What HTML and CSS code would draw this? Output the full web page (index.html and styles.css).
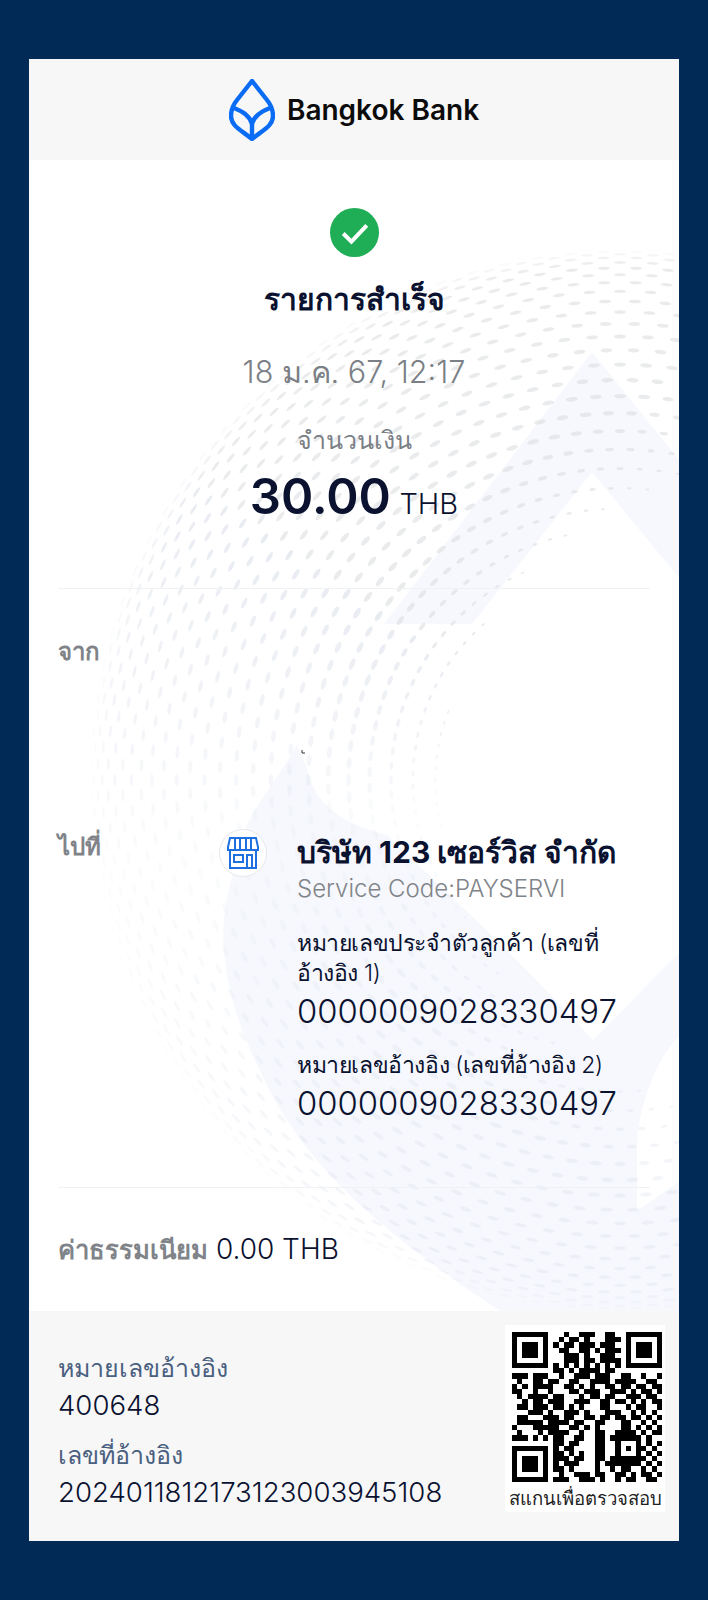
FILE: index.html
```html
<!DOCTYPE html>
<html lang="th">
<head>
    <meta charset="UTF-8">
    <meta name="viewport" content="width=device-width, initial-scale=1.0">
    <title>รายการสำเร็จ</title>
    <link rel="stylesheet" href="styles.css">
</head>
<body>
    <div id="slip">
        <div class="slip-header">
            <svg class="logo-mark" viewBox="0 0 46 62" aria-hidden="true">
                <path d="M23 2 L8 21 C4 26 2 31 2 37 C2 47 12 51 23 60 C34 51 44 47 44 37 C44 31 42 26 38 21Z"/>
                <path d="M5 29 C13 32 21 37 23 45 C25 37 33 32 41 29"/>
                <path d="M23 45 V60"/>
            </svg>
            <span class="logo-text">Bangkok Bank</span>
        </div>

        <div class="slip-body">
            <svg id="watermark" viewBox="29 160 650 1151" aria-hidden="true">
                <path class="wm" d="M592 352 L384 624 H472 L592 472 L680 579 V461Z"/>
                <path class="wm" d="M297 745 C275 785 243 815 236 860 C226 900 220 925 225 960 C230 1000 240 1030 262 1075 C300 1158 370 1225 500 1311 H680 V1181 L637 1211 V1150 C637 1110 655 1060 680 1035 V952 L593 1040 C520 960 450 895 387 835 C350 825 315 810 307 768Z"/>
                <g id="dots"></g>
                <path class="speck" d="M302 750 V753 H305"/>
            </svg>

            <div class="summary">
                <div class="check-badge">
                    <svg viewBox="0 0 24 24" aria-hidden="true"><path d="M6.5 12.5 L10.5 16.5 L18 8.5"/></svg>
                </div>
                <h1>รายการสำเร็จ</h1>
                <div class="date">18 ม.ค. 67, 12:17</div>
                <div class="amount-label">จำนวนเงิน</div>
                <div class="amount"><strong>30.00</strong> <span>THB</span></div>
            </div>

            <div class="row row-from">
                <div class="row-label">จาก</div>
            </div>

            <div class="row row-to">
                <div class="row-label">ไปที่</div>
                <div class="store-icon">
                    <svg viewBox="0 0 34 34" aria-hidden="true">
                        <path d="M4 2 H30 L32 11 V14 H2 V11Z"/>
                        <path d="M9 2 V14 M14 2 V14 M20 2 V14 M25 2 V14"/>
                        <path d="M4 14 V32 H30 V14"/>
                        <path d="M8 19 H17 V26 H8Z M21 32 V19 H26 V32"/>
                    </svg>
                </div>
                <div class="payee">
                    <div class="payee-name">บริษัท 123 เซอร์วิส จำกัด</div>
                    <div class="payee-code">Service Code:PAYSERVI</div>
                    <div class="ref-label">หมายเลขประจำตัวลูกค้า (เลขที่<br>อ้างอิง 1)</div>
                    <div class="ref-value">0000009028330497</div>
                    <div class="ref-label">หมายเลขอ้างอิง (เลขที่อ้างอิง 2)</div>
                    <div class="ref-value">0000009028330497</div>
                </div>
            </div>

            <div class="fee">
                <span class="row-label">ค่าธรรมเนียม</span> 0.00 THB
            </div>
        </div>

        <div class="slip-footer">
            <div class="refs">
                <div class="foot-label">หมายเลขอ้างอิง</div>
                <div class="foot-value">400648</div>
                <div class="foot-label">เลขที่อ้างอิง</div>
                <div class="foot-value">2024011812173123003945108</div>
            </div>
            <div class="qr-box">
                <svg id="qr" viewBox="0 0 29 29" shape-rendering="crispEdges" aria-hidden="true"></svg>
                <div class="qr-caption">สแกนเพื่อตรวจสอบ</div>
            </div>
        </div>
    </div>
    <script src="app.js"></script>
</body>
</html>
```

FILE: styles.css
```css
* {
    box-sizing: border-box;
}
body {
    margin: 0;
    height: 1600px;
    padding-top: 59px;
    background-color: #012a56;
    font-family: Inter, "Noto Sans", "Liberation Sans", sans-serif;
    color: #0a1230;
}
#slip {
    width: 650px;
    margin: 0 auto;
    background: white;
}
.slip-header {
    height: 101px;
    background: #f7f7f8;
    display: flex;
    align-items: center;
    justify-content: center;
    gap: 12px;
}
.logo-mark {
    width: 46px;
    height: 62px;
    fill: none;
    stroke: #0a6cf5;
    stroke-width: 4.4;
    stroke-linejoin: miter;
}
.logo-text {
    font-size: 28px;
    font-weight: 600;
    color: #0b0b0b;
}
.slip-body {
    position: relative;
    height: 1151px;
    overflow: hidden;
}
#watermark {
    position: absolute;
    left: 0;
    top: 0;
    width: 650px;
    height: 1151px;
}
.wm {
    fill: #f6f8fd;
}
.speck {
    fill: none;
    stroke: #333;
    stroke-width: 1;
}
.summary, .row, .fee {
    position: relative;
}
.summary {
    height: 429px;
    margin: 0 29px;
    padding-top: 48px;
    border-bottom: 1px solid #f0f1f3;
    text-align: center;
}
.check-badge {
    width: 49px;
    height: 49px;
    margin: 0 auto;
    border-radius: 50%;
    background: #1fae56;
}
.check-badge svg {
    width: 49px;
    height: 49px;
    fill: none;
    stroke: white;
    stroke-width: 2;
}
h1 {
    margin: 22px 0 0;
    font-size: 30px;
    line-height: 40px;
    font-weight: 700;
}
.date {
    margin-top: 31px;
    font-size: 30.6px;
    line-height: 44px;
    font-weight: 300;
    color: #7b7f86;
}
.amount-label {
    margin-top: 29px;
    font-size: 25px;
    line-height: 34px;
    font-weight: 300;
    color: #7b7f86;
}
.amount {
    margin-top: 10px;
    line-height: 60px;
}
.amount strong {
    font-size: 49px;
    font-weight: 600;
}
.amount span {
    margin-left: 4px;
    font-size: 29px;
    font-weight: 300;
}
.row {
    display: flex;
    padding: 0 29px;
}
.row-label {
    font-size: 24px;
    font-weight: 700;
    color: #808489;
}
.row-from {
    height: 238px;
    padding-top: 43px;
}
.row-to {
    height: 360px;
}
.row-to .row-label {
    width: 161px;
}
.store-icon {
    width: 48px;
    height: 48px;
    margin-top: 2px;
    padding: 6px;
    border-radius: 50%;
    background: white;
    border: 1px solid #e6e8ee;
}
.store-icon svg {
    display: block;
    width: 34px;
    height: 34px;
    fill: none;
    stroke: #1e6fe0;
    stroke-width: 2;
}
.payee {
    width: 322px;
    margin: 6px 0 0 30px;
}
.payee-name {
    font-size: 30px;
    line-height: 38px;
    font-weight: 700;
    white-space: nowrap;
}
.payee-code {
    padding-bottom: 5px;
    font-size: 24px;
    line-height: 36px;
    font-weight: 300;
    color: #808489;
}
.ref-label {
    margin-top: 16px;
    font-size: 23px;
    line-height: 30px;
    font-weight: 300;
    letter-spacing: -0.4px;
    white-space: nowrap;
}
.ref-value {
    font-size: 32.8px;
    line-height: 46px;
    font-weight: 300;
}
.fee {
    margin: 0 29px;
    padding-top: 42px;
    border-top: 1px solid #f0f1f3;
    font-size: 28px;
    font-weight: 300;
}
.fee .row-label {
    font-size: 25.6px;
}
.slip-footer {
    position: relative;
    height: 230px;
    background: #f7f7f8;
    display: flex;
    justify-content: space-between;
    padding: 14px 14px 29px 29px;
}
.refs {
    padding-top: 25px;
}
.foot-label {
    font-size: 25px;
    line-height: 36px;
    font-weight: 300;
    color: #4a6080;
}
.foot-value {
    font-size: 27.6px;
    line-height: 38px;
    font-weight: 300;
    margin-bottom: 13px;
}
.qr-box {
    width: 160px;
    height: 187px;
    background: white;
    padding-top: 7px;
}
#qr {
    display: block;
    width: 150px;
    height: 150px;
    margin-left: 7px;
}
.qr-caption {
    margin-top: 3px;
    font-size: 18.5px;
    line-height: 26px;
    white-space: nowrap;
    text-align: center;
    color: #222;
}
```

FILE: app.js
```js
// qr modules, 1 = black
const qrRows = [
    "11111110001001110011001111111",
    "10000010010110100011101000001",
    "10111010101101110111001011101",
    "10111010011001101011101011101",
    "10111010001110100111001011101",
    "10000010001110110111101000001",
    "11111110101010101010101111111",
    "00000000110101111011000000000",
    "11101110010011101110011001001",
    "01001101100110011110111100110",
    "10101111001101010011011011011",
    "11001001000110111001110101101",
    "01011110110001011011001110110",
    "00101101110011100110110101011",
    "01101110110101000110001011001",
    "00011101001110100011100101010",
    "01100011101100110110110110101",
    "01111101111011001100011001010",
    "10001111100110101000011010101",
    "01000101111001001100111101011",
    "11101010110011001101111110100",
    "00000000110110001100100010101",
    "11111110101100001100101011010",
    "10000010110101001100100010101",
    "10111010111011001101111111010",
    "10111010101110001011111110101",
    "10111010110100001001011001010",
    "10000010010011101100110101101",
    "11111110111001110100101100110"
];

function drawQr() {
    let d = "";
    qrRows.forEach((row, y) => {
        [...row].forEach((cell, x) => {
            if (cell === "1") d += `M${x} ${y}h1v1h-1z`;
        });
    });
    const path = document.createElementNS("http://www.w3.org/2000/svg", "path");
    path.setAttribute("d", d);
    document.getElementById("qr").appendChild(path);
}

// globe of dots behind the slip, rings get tighter towards the rim
function drawDots() {
    const cx = 620, cy = 780, R = 530;
    const count = 100;
    let out = "";
    let ring = 0;
    for (let t = 88; t > 15; t -= 2.6) {
        const rad = t * Math.PI / 180;
        const r = R * Math.sin(rad);
        const squash = Math.cos(rad);
        const odd = ring++ % 2 ? 0.5 : 0;
        for (let i = 0; i < count; i++) {
            const a = (i + odd) * 2 * Math.PI / count;
            const x = cx + r * Math.cos(a);
            const y = cy + r * Math.sin(a);
            if (x < 29 || x > 680 || y < 160 || y > 1311) continue;
            // hollow part of the globe, off to the right
            const hole = Math.hypot(x - 760, y - 790);
            if (hole < 320) continue;
            const depth = Math.min(1, (hole - 320) / 90);
            const deg = (a * 180 / Math.PI) % 360;
            // strongest on the upper left, fading to the left and below
            let tone;
            if (deg > 215) tone = 1;
            else if (deg > 170) tone = 0.2 + (deg - 170) / 45 * 0.8;
            else if (deg > 120) tone = 0.2 + (170 - deg) / 50 * 0.3;
            else tone = 0.5;
            const edge = Math.min(1, (89 - t) / 14);
            const rx = 1 + 1.8 * squash * depth;
            const ry = 2 + 4 * depth;
            const fill = deg > 215 ? "#d9dadc" : "#d5dbe6";
            out += `<ellipse cx="${x.toFixed(1)}" cy="${y.toFixed(1)}" rx="${rx.toFixed(1)}" ry="${ry.toFixed(1)}" transform="rotate(${deg.toFixed(1)} ${x.toFixed(1)} ${y.toFixed(1)})" fill="${fill}" opacity="${(tone * edge * 0.55).toFixed(2)}"/>`;
        }
    }
    document.getElementById("dots").innerHTML = out;
}

drawQr();
drawDots();
```
